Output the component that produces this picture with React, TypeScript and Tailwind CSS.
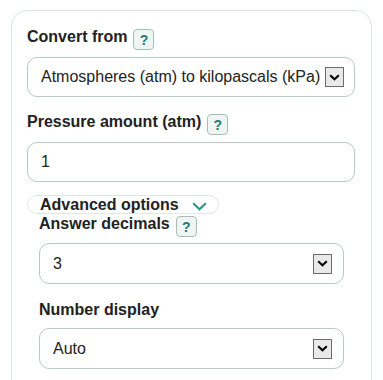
import React from 'react';

const HelpBadge = () => (
  <span className="ml-[6px] mt-[2px] flex h-[21px] w-[21px] items-center justify-center rounded-[4px] border border-[#a9bdb8] bg-[#eef5f2] text-[14px] font-bold leading-none text-[#1f7a70]">
    ?
  </span>
);

const Label = ({ text, help = true }: { text: string; help?: boolean }) => (
  <div className="flex items-start">
    <span className="text-[16px] font-bold leading-[20px] text-[#222]">{text}</span>
    {help && <HelpBadge />}
  </div>
);

const ArrowBox = () => (
  <span className="ml-auto flex h-[20px] w-[19px] items-center justify-center border border-[#6b6b6b] bg-[#e9e9e9]">
    <svg width="11" height="7" viewBox="0 0 11 7">
      <path d="M1.2 1.2 L5.5 5.3 L9.8 1.2" fill="none" stroke="#000" strokeWidth="2" />
    </svg>
  </span>
);

const SelectBox = ({ value, className }: { value: string; className: string }) => (
  <div className={`flex items-center rounded-[10px] border border-[#b9c9c5] bg-white pl-[13px] pr-[10px] text-[16px] text-[#222] ${className}`}>
    <span>{value}</span>
    <ArrowBox />
  </div>
);

export default function App() {
  return (
    <div className="h-[380px] w-[383px] overflow-hidden bg-white pt-[10px] font-['Liberation_Sans',Arial,sans-serif]">
      <div className="ml-[11px] h-[400px] w-[361px] rounded-[16px] border border-[#dce5e2] pl-[15px] pr-[16px] pt-[16px]">
        <Label text="Convert from" />
        <SelectBox value="Atmospheres (atm) to kilopascals (kPa)" className="mt-[7px] h-[40px]" />

        <div className="mt-[15px]">
          <Label text="Pressure amount (atm)" />
        </div>
        <div className="mt-[7px] flex h-[40px] items-center rounded-[10px] border border-[#b9c9c5] pl-[13px] text-[16px] text-[#222]">
          1
        </div>

        <div className="mt-[13px] flex h-[19px] w-[192px] items-center rounded-full border border-[#dfe8e5] pl-[12px]">
          <span className="text-[16px] font-bold leading-[18px] text-[#222]">Advanced options</span>
          <svg className="ml-[13px] mt-[3px]" width="15" height="9" viewBox="0 0 15 9">
            <path d="M1.2 1.2 L7.5 7.3 L13.8 1.2" fill="none" stroke="#1e9a82" strokeWidth="2" />
          </svg>
        </div>

        <div className="pl-[12px] pr-[11px]">
          <Label text="Answer decimals" />
          <SelectBox value="3" className="mt-[6px] h-[41px] pr-[11px]" />

          <div className="mt-[16px]">
            <Label text="Number display" help={false} />
          </div>
          <SelectBox value="Auto" className="mt-[8px] h-[41px] pr-[11px]" />
        </div>
      </div>
    </div>
  );
}
